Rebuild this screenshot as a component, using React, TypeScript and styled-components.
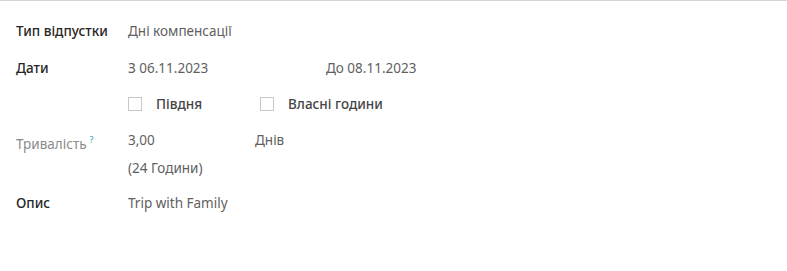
import React from 'react';
import styled, { createGlobalStyle } from 'styled-components';

const GlobalStyle = createGlobalStyle`
  html, body {
    margin: 0;
    padding: 0;
    background: #ffffff;
  }
  body {
    font-family: "Noto Sans", "Open Sans", Arial, sans-serif;
    font-size: 13.5px;
    color: #212529;
  }
`;

const Sheet = styled.div`
  border-top: 1px solid #d4d4d4;
  padding: 12px 16px 0;
  min-height: 258px;
`;

const Row = styled.div`
  display: grid;
  grid-template-columns: 112px 1fr;
  align-items: start;
  padding: 8px 0;

  &:first-child {
    padding-bottom: 9px;
  }
  &:last-child {
    padding-top: 7px;
  }
`;

const Label = styled.div<{ $muted?: boolean }>`
  line-height: 20px;
  font-weight: ${(p) => (p.$muted ? 400 : 500)};
  color: ${(p) => (p.$muted ? '#8a8a8a' : '#262626')};
`;

const Help = styled.sup`
  color: #17a2b8;
  font-size: 9px;
  margin-left: 3px;
  vertical-align: 6px;
`;

const Value = styled.div`
  line-height: 20px;
  color: #5f5f5f;
`;

const Pair = styled.div<{ $first: number }>`
  display: grid;
  grid-template-columns: ${(p) => p.$first}px auto;
  line-height: 20px;
  color: #5f5f5f;
`;

const Stack = styled.div`
  display: flex;
  flex-direction: column;
  gap: 8px;
`;

const CheckGroup = styled.div`
  display: grid;
  grid-template-columns: 132px auto;
`;

const Check = styled.label`
  display: flex;
  align-items: center;
  gap: 14px;
  line-height: 20px;
  font-weight: 500;
  color: #444444;
`;

const Box = styled.span`
  width: 12px;
  height: 12px;
  border: 1px solid #c8c8c8;
  background: #fff;
  flex: none;
`;

export default function App() {
  return (
    <>
      <GlobalStyle />
      <Sheet>
        <Row>
          <Label>Тип відпустки</Label>
          <Value>Дні компенсації</Value>
        </Row>
        <Row>
          <Label>Дати</Label>
          <Pair $first={198}>
            <span>З 06.11.2023</span>
            <span>До 08.11.2023</span>
          </Pair>
        </Row>
        <Row>
          <Label />
          <CheckGroup>
            <Check>
              <Box />
              Півдня
            </Check>
            <Check>
              <Box />
              Власні години
            </Check>
          </CheckGroup>
        </Row>
        <Row>
          <Label $muted>
            Тривалість<Help>?</Help>
          </Label>
          <Stack>
            <Pair $first={127}>
              <span>3,00</span>
              <span>Днів</span>
            </Pair>
            <Value>(24 Години)</Value>
          </Stack>
        </Row>
        <Row>
          <Label>Опис</Label>
          <Value>Trip with Family</Value>
        </Row>
      </Sheet>
    </>
  );
}
